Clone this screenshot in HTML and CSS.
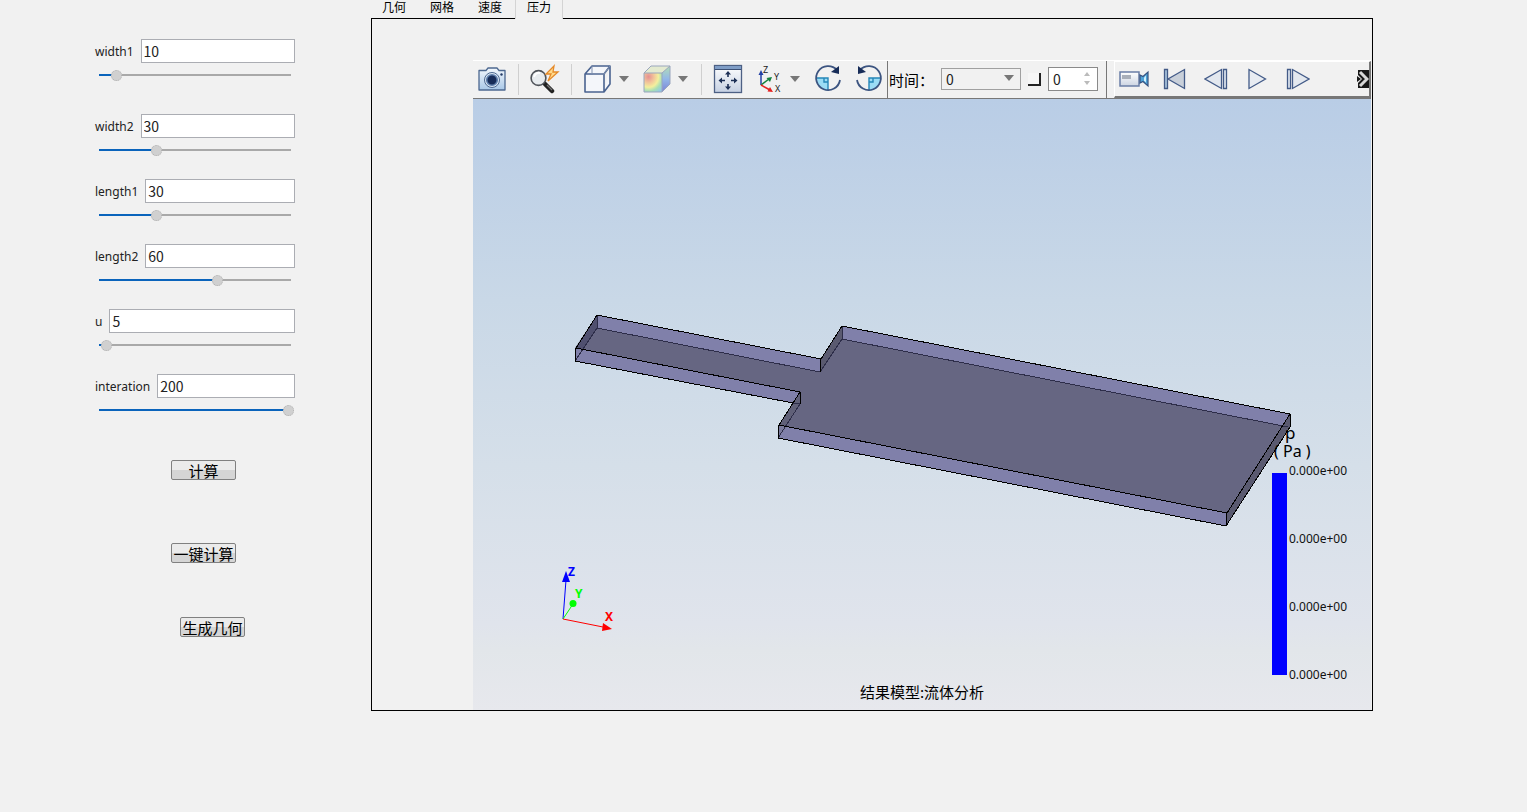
FILE: index.html
```
<!DOCTYPE html>
<html lang="zh-CN">
<head>
<meta charset="utf-8">
<title>流体分析</title>
<link rel="stylesheet" href="styles.css">
</head>
<body>
<div class="app">
  <form class="params">
    <div class="field field-first">
      <div class="field-row"><label for="width1">width1</label><input class="value" id="width1" type="text" value="10"></div>
      <input class="slider" type="range" aria-label="width1" min="2" max="96" value="10" style="--fill:9%">
    </div>
    <div class="field">
      <div class="field-row"><label for="width2">width2</label><input class="value" id="width2" type="text" value="30"></div>
      <input class="slider" type="range" aria-label="width2" min="2" max="96" value="30" style="--fill:30%">
    </div>
    <div class="field">
      <div class="field-row"><label for="length1">length1</label><input class="value" id="length1" type="text" value="30"></div>
      <input class="slider" type="range" aria-label="length1" min="2" max="96" value="30" style="--fill:30%">
    </div>
    <div class="field">
      <div class="field-row"><label for="length2">length2</label><input class="value" id="length2" type="text" value="60"></div>
      <input class="slider" type="range" aria-label="length2" min="2" max="96" value="60" style="--fill:61%">
    </div>
    <div class="field">
      <div class="field-row"><label for="u">u</label><input class="value" id="u" type="text" value="5"></div>
      <input class="slider" type="range" aria-label="u" min="2" max="96" value="5" style="--fill:3%">
    </div>
    <div class="field">
      <div class="field-row"><label for="interation">interation</label><input class="value" id="interation" type="text" value="200"></div>
      <input class="slider" type="range" aria-label="interation" min="2" max="201" value="200" style="--fill:98%">
    </div>
    <div class="actions">
      <button class="action" type="button">计算</button>
      <button class="action action-all" type="button">一键计算</button>
      <button class="action action-geometry" type="button">生成几何</button>
    </div>
  </form>

  <main class="results">
    <nav class="tabs" role="tablist">
      <button class="tab" role="tab">几何</button>
      <button class="tab" role="tab">网格</button>
      <button class="tab" role="tab">速度</button>
      <button class="tab tab-active" role="tab" aria-selected="true">压力</button>
    </nav>
    <section class="panel">
      <div class="toolbar">
        <div class="tools">
          <button class="tool" aria-label="截图">
            <svg width="30" height="30" viewBox="0 0 30 30">
              <defs><linearGradient id="cam" x2="0" y2="1"><stop stop-color="#f2f7fc"/><stop offset="1" stop-color="#a9c8e8"/></linearGradient></defs>
              <path d="M2 6.500H9L11 4H20L22 6.500H28V26H2Z" fill="url(#cam)" stroke="#4d6890" stroke-width="1.300" stroke-linejoin="round"/>
              <circle cx="15" cy="16" r="7.500" fill="#dce8f5" stroke="#4d6890"/>
              <circle cx="15" cy="16" r="5.300" fill="#172c58" stroke="#5f7fac" stroke-width="1.600"/>
              <circle cx="24.500" cy="10.500" r="1.200" fill="#243b66"/>
            </svg>
          </button>
          <span class="divider"></span>
          <button class="tool" aria-label="快速查看">
            <svg width="30" height="30" viewBox="0 0 30 30">
              <path d="M15 20L22 27" stroke="#222" stroke-width="4.500" stroke-linecap="round"/>
              <path d="M17 21L22 26" stroke="#777" stroke-width="1.200"/>
              <circle cx="8.500" cy="14" r="7.400" fill="#e8ecef" stroke="#50545a" stroke-width="1.600"/>
              <path d="M4 13A5 5 0 0 1 10 9" fill="none" stroke="#fff" stroke-width="2"/>
              <path d="M24 2L16 10L21 10L18 17L28 8L23 8Z" fill="#ffd98a" stroke="#e58a2a" stroke-width="1.300"/>
            </svg>
          </button>
          <span class="divider"></span>
          <div class="split">
            <button class="tool" aria-label="显示模式">
              <svg width="30" height="30" viewBox="0 0 30 30">
                <path d="M2 10H21V28H2ZM2 10L9 2H27L21 10M27 2V20L21 28" fill="#f4f6fa" stroke="#4a6390" stroke-width="1.600" stroke-linejoin="round"/>
                <path d="M9 2V10M10 10H21L27 2" fill="none" stroke="#8091b0"/>
              </svg>
            </button>
            <button class="drop" aria-label="显示模式选项"><svg width="12" height="6" viewBox="0 0 12 6"><path d="M1 0H11L6 6Z" fill="#777"/></svg></button>
          </div>
          <div class="split">
            <button class="tool" aria-label="云图">
              <svg width="30" height="30" viewBox="0 0 30 30">
                <defs>
                  <radialGradient id="heat" cx=".25" cy=".2" r="1"><stop stop-color="#e58f92"/><stop offset=".3" stop-color="#f2c49a"/><stop offset=".55" stop-color="#f3ef9d"/><stop offset=".75" stop-color="#a9dfb5"/><stop offset="1" stop-color="#8fc8ea"/></radialGradient>
                  <linearGradient id="heatside" x2="0" y2="1"><stop stop-color="#b2dfb4"/><stop offset=".5" stop-color="#92b7e8"/><stop offset="1" stop-color="#7b83d4"/></linearGradient>
                </defs>
                <path d="M2 9H20V28H2Z" fill="url(#heat)"/>
                <path d="M2 9L9 2H28L20 9Z" fill="#e3ead0"/>
                <path d="M20 9L28 2V20L20 28Z" fill="url(#heatside)"/>
                <path d="M2 9H20V28H2ZM2 9L9 2H28L20 9M28 2V20L20 28" fill="none" stroke="#9aa6bd" stroke-linejoin="round"/>
              </svg>
            </button>
            <button class="drop" aria-label="云图选项"><svg width="12" height="6" viewBox="0 0 12 6"><path d="M1 0H11L6 6Z" fill="#777"/></svg></button>
          </div>
          <span class="divider"></span>
          <button class="tool" aria-label="适应窗口">
            <svg width="30" height="30" viewBox="0 0 30 30">
              <defs><linearGradient id="win" x2="0" y2="1"><stop stop-color="#fff"/><stop offset="1" stop-color="#c5d0e2"/></linearGradient></defs>
              <rect x="1.500" y="1.500" width="27" height="27" fill="url(#win)" stroke="#4d6084" stroke-width="1.300"/>
              <path d="M2 2H28V5H2Z" fill="#7f9dc6"/><path d="M2 5.500H28" stroke="#3c5075"/>
              <path d="M15 13V9M15 20V24M12 16.500H8M18 16.500H22" stroke="#1c2f55" stroke-width="1.600"/>
              <path d="M15 7L18 10.500H12ZM15 26L18 22.500H12ZM5.500 16.500L9 13.500V19.500ZM24.500 16.500L21 13.500V19.500Z" fill="#1c2f55"/>
            </svg>
          </button>
          <div class="split">
            <button class="tool" aria-label="视图方向">
              <svg width="30" height="32" viewBox="0 0 30 32">
                <path d="M7 22V9" stroke="#2340a5" stroke-width="1.500"/><path d="M7 7L9.500 12H4.500Z" fill="#2340a5"/>
                <path d="M7 22L15 16" stroke="#13813d" stroke-width="1.500"/><path d="M18 14L16 19L12.500 15Z" fill="#13813d"/>
                <path d="M7 22L16 27" stroke="#e52222" stroke-width="1.500"/><path d="M19 29L13.500 28.500L16 24Z" fill="#e52222"/>
                <text class="mini" x="9" y="10">Z</text><text class="mini" x="20" y="17">Y</text><text class="mini" x="21" y="29">X</text>
              </svg>
            </button>
            <button class="drop" aria-label="视图方向选项"><svg width="12" height="6" viewBox="0 0 12 6"><path d="M1 0H11L6 6Z" fill="#777"/></svg></button>
          </div>
          <button class="tool" aria-label="顺时针旋转">
            <svg width="30" height="30" viewBox="0 0 30 30">
              <path d="M3 14H15V26.500A12 12 0 0 1 3 14Z" fill="#9bdcf5"/>
              <path d="M3 14H15V26M11 14V18H15" fill="none" stroke="#2586b8" stroke-width="1.400"/>
              <path d="M24 6A12 12 0 1 0 27 16" fill="none" stroke="#3c5480" stroke-width="1.800"/>
              <path d="M26 2V10L18 8Z" fill="#172c58"/>
            </svg>
          </button>
          <button class="tool" aria-label="逆时针旋转">
            <svg width="30" height="30" viewBox="0 0 30 30">
              <path d="M27 14H15V26.500A12 12 0 0 0 27 14Z" fill="#9bdcf5"/>
              <path d="M27 14H15V26M19 14V18H15" fill="none" stroke="#2586b8" stroke-width="1.400"/>
              <path d="M6 6A12 12 0 1 1 3 16" fill="none" stroke="#3c5480" stroke-width="1.800"/>
              <path d="M4 2V10L12 8Z" fill="#172c58"/>
            </svg>
          </button>
        </div>

        <div class="timebar">
          <label class="time-label" for="time">时间：</label>
          <div class="select-wrap">
            <select class="time-select" id="time"><option>0</option></select>
            <svg class="select-arrow" width="10" height="6" viewBox="0 0 10 6"><path d="M0 0H10L5 6Z" fill="#777"/></svg>
          </div>
          <input class="check" type="checkbox" aria-label="启用帧">
          <div class="spin">
            <input class="spin-value" type="text" aria-label="帧" value="0">
            <svg width="6" height="14" viewBox="0 0 6 14"><path d="M0 4H6L3 0ZM0 9H6L3 13Z" fill="#bbb"/></svg>
          </div>
        </div>

        <div class="playback">
          <button class="tool" aria-label="录制">
            <svg width="30" height="20" viewBox="0 0 30 20">
              <defs><linearGradient id="rec" x2="0" y2="1"><stop stop-color="#fff"/><stop offset="1" stop-color="#ccd4e2"/></linearGradient></defs>
              <rect x="1" y="3" width="19" height="14" fill="url(#rec)" stroke="#6a7ea6" stroke-width="1.500"/>
              <rect x="3" y="6" width="9" height="4" fill="#a9afba"/>
              <path d="M21 6L24 7.500L29 3V17L24 12.500L21 14Z" fill="#4fa4d8" stroke="#35517f" stroke-width="1.200"/><path d="M25 8.500L27 6.500V13.500L25 11.500Z" fill="#d0effc"/>
            </svg>
          </button>
          <button class="tool" aria-label="第一帧">
            <svg width="24" height="22" viewBox="0 0 24 22"><path d="M1.500 1.500H4.500V20.500H1.500Z" fill="#a8c4dc" stroke="#435b88" stroke-width="1.300"/><path d="M21.500 1.500V20.500L5 11Z" fill="#c9d0da" stroke="#435b88" stroke-width="1.300"/></svg>
          </button>
          <button class="tool" aria-label="上一帧">
            <svg width="24" height="22" viewBox="0 0 24 22"><path d="M17.500 1.500V20.500L1 11Z" fill="#e3e8ef" stroke="#435b88" stroke-width="1.300"/><path d="M19.500 1.500H22.500V20.500H19.500Z" fill="#dfe7f0" stroke="#435b88" stroke-width="1.300"/></svg>
          </button>
          <button class="tool" aria-label="播放">
            <svg width="20" height="22" viewBox="0 0 20 22"><path d="M2 1.500V20.500L18.500 11Z" fill="#e8ecf2" stroke="#435b88" stroke-width="1.300"/></svg>
          </button>
          <button class="tool" aria-label="下一帧">
            <svg width="24" height="22" viewBox="0 0 24 22"><path d="M1.500 1.500H4.500V20.500H1.500Z" fill="#dfe7f0" stroke="#435b88" stroke-width="1.300"/><path d="M6.500 1.500V20.500L23 11Z" fill="#e3e8ef" stroke="#435b88" stroke-width="1.300"/></svg>
          </button>
          <button class="more" aria-label="更多">
            <svg width="12" height="18" viewBox="0 0 12 18">
              <path d="M1 0H12V18H1V13L5 9L1 5Z" fill="#181818"/>
              <path d="M0 6L4 9L0 12Z" fill="#181818"/>
              <path d="M3 2L10 9L3 16" fill="none" stroke="#d8d8d8" stroke-width="3"/>
            </svg>
          </button>
        </div>
      </div>

      <div class="viewport">
        <svg class="scene" viewBox="473 99 898 611">
          <path d="M597 315L821 359L842 326L1290 414V427L1226 526L778 438V426L793 403L575 361V348Z" fill="#666682"/>
          <path d="M597 315L821 359V372L597 328ZM842 326L1290 414V427L842 339Z" fill="#8080aa"/>
          <path d="M597 315L576 348V361L597 328Z" fill="#50506f"/>
          <path d="M842 326L821 359V372L842 339ZM1290 414L1227 513L1226 526L1290 427Z" fill="#5a5a70"/>
          <path d="M576 348L800 392V404L575 361ZM779 425L1227 513L1226 526L778 438Z" fill="#8080aa"/>
          <path d="M800 392L779 425L778 438L800 404Z" fill="#606078"/>
          <path d="M779 425L787 427L778 438Z" fill="#7a7a9c"/>
          <g fill="none" shape-rendering="crispEdges">
            <path d="M597 315V328L820 372M842 326V339L1288 427M597 328L575 361M820 372L842 339M778 438L800 404L793 403" stroke="#2d2d49"/>
            <path d="M597 315L821 359L842 326L1290 414L1227 513L779 425L800 392L576 348ZM576 348L575 361L793 403M800 392V404M779 425L778 438L1226 526L1227 513M1226 526L1290 427V414M821 359L820 372" stroke="#000"/>
          </g>
          <g class="axes">
            <path d="M563 619L566 580" stroke="#00f"/><path d="M566 571L570 582H562Z" fill="#00f"/>
            <path d="M563 619L573 604" stroke="#0f0"/><circle cx="573" cy="603.500" r="3.500" fill="#0f0"/>
            <path d="M563 619L603 627" stroke="#f00"/><path d="M612 629L602 631L603 623Z" fill="#f00"/>
            <text x="568" y="576" fill="#00f">Z</text>
            <text x="575" y="598" fill="#0f0">Y</text>
            <text x="605" y="621" fill="#f00">X</text>
          </g>
        </svg>
        <div class="legend">
          <div class="legend-title">p</div>
          <div class="legend-unit">( Pa )</div>
          <div class="legend-scale">
            <div class="legend-bar"></div>
            <div class="legend-labels"><span>0.000e+00</span><span>0.000e+00</span><span>0.000e+00</span><span>0.000e+00</span></div>
          </div>
        </div>
        <div class="caption">结果模型:流体分析</div>
      </div>
    </section>
  </main>
</div>
</body>
</html>
```
FILE: styles.css
```
* { box-sizing: border-box; }
body {
  margin: 0;
  background: #f1f1f1;
  color: #000;
  font-family: "Noto Sans", "Noto Sans CJK SC", sans-serif;
  font-size: 12px;
}
button { padding: 0; border: 0; background: none; color: inherit; font: inherit; }
svg { display: block; flex: none; }

.app {
  display: flex;
  min-height: 100vh;
  padding-right: 154px;
  padding-bottom: 101px;
}

/* Parameter form */
.params { flex: none; width: 371px; padding: 39px 76px 0 95px; }
.field { display: flex; flex-direction: column; gap: 4px; margin-bottom: 21px; }
.field-first { margin-bottom: 31px; }
.field-row { display: flex; align-items: center; gap: 7px; height: 24px; color: #222; }
.value {
  flex: 1;
  min-width: 0;
  height: 24px;
  padding: 0 2px;
  border: 1px solid #abadb3;
  background: #fff;
  color: #222;
  font: 14px "Noto Sans CJK SC", sans-serif;
}
.slider {
  appearance: none;
  width: 200px;
  height: 16px;
  margin: 0;
  padding: 0;
  background: linear-gradient(to right, #0a64bc var(--fill), #a9a9a9 var(--fill)) center / 192px 2px no-repeat;
}
.slider::-webkit-slider-thumb {
  appearance: none;
  width: 11px;
  height: 11px;
  border: 1px dotted #b0b0b0;
  border-radius: 50%;
  background: #d0d0d0;
}
.actions { display: flex; flex-direction: column; padding: 21px 0 0 76px; }
.action {
  width: 65px;
  height: 20px;
  border: 1px solid #808080;
  border-radius: 2px;
  background: linear-gradient(#ebebeb 50%, #d5d5d5 50%);
  font: 15px/17px "Noto Sans CJK SC", sans-serif;
  white-space: nowrap;
}
.action-all { margin-top: 63px; }
.action-geometry { margin-top: 54px; margin-left: 9px; }

/* Result panel */
.results { flex: 1; min-width: 0; display: flex; flex-direction: column; }
.tabs { display: flex; height: 18px; }
.tab { width: 48px; height: 18px; padding: 0 2px 4px 0; font: 12px/14px "Noto Sans CJK SC", sans-serif; }
.tab-active {
  position: relative;
  height: 19px;
  padding: 0 0 5px;
  border: solid #d4d4d4;
  border-width: 0 1px;
  background: #f1f1f1;
}
.panel {
  flex: 1;
  display: flex;
  flex-direction: column;
  padding: 41px 1px 0 101px;
  border: 1px solid #000;
}
.toolbar {
  display: flex;
  height: 39px;
  border-top: 1px solid #fff;
  border-bottom: 1px solid #777;
}
.tools { display: flex; align-items: center; gap: 3px; width: 414px; }
.tool { display: flex; flex: none; align-items: center; justify-content: center; width: 38px; height: 36px; }
.tools, .timebar { padding-bottom: 1px; }
.split { display: flex; }
.drop { display: flex; align-items: center; width: 18px; padding-left: 1px; }
.divider { flex: none; width: 1px; height: 31px; margin: 0 4px; background: #cfcfcf; }
.mini { fill: #222; font: 9px "Noto Sans", sans-serif; }
.timebar {
  display: flex;
  align-items: center;
  gap: 7px;
  padding-left: 1px;
  padding-right: 8px;
  border: solid #777;
  border-width: 0 1px;
}
.time-label { width: 45px; font: 15px "Noto Sans CJK SC", sans-serif; white-space: nowrap; }
.select-wrap { position: relative; }
.time-select {
  display: block;
  appearance: none;
  width: 80px;
  height: 22px;
  padding: 0 4px;
  border: 1px solid #a0a0a0;
  border-radius: 0;
  background: #f1f1f1;
  color: #222;
  font: 14px "Noto Sans CJK SC", sans-serif;
}
.select-arrow { position: absolute; right: 7px; top: 7px; pointer-events: none; }
.check {
  appearance: none;
  width: 13px;
  height: 13px;
  margin: 0;
  border: solid #222;
  border-width: 0 2px 2px 0;
  background: #f6f6f6;
}
.spin {
  display: flex;
  align-items: center;
  width: 50px;
  height: 24px;
  padding: 0 7px 0 4px;
  border: 1px solid #8a8a8a;
  background: #fff;
}
.spin-value {
  flex: 1;
  min-width: 0;
  padding: 0;
  border: 0;
  background: none;
  color: #222;
  font: 14px/20px "Noto Sans CJK SC", sans-serif;
}
.playback {
  flex: 1;
  display: flex;
  align-items: center;
  gap: 3px;
  margin-left: 7px;
  border: solid #fff;
  border-width: 1px 2px 2px 1px;
  border-right-color: #777;
  border-bottom-color: #777;
}
.more { margin-left: auto; }

/* 3D view */
.viewport {
  position: relative;
  flex: 1;
  min-height: 400px;
  background: linear-gradient(#b9cde6, #c9d8e7 33%, #d5dfe9 60%, #e0e4ec 86%, #e2e6ea 90%, #e7e8ed);
}
.scene { position: absolute; inset: 0; width: 100%; height: 100%; }
.axes text { font: bold 12px "Noto Sans", sans-serif; }
.legend { position: absolute; right: 21px; bottom: 27px; width: 78px; color: #111; }
.legend-title { padding-left: 13px; font-size: 17px; line-height: 18px; color: #000; }
.legend-unit { padding: 0 0 3px 2px; font-size: 16px; line-height: 18px; color: #000; }
.legend-scale { display: flex; gap: 2px; }
.legend-bar { width: 15px; height: 202px; margin-top: 10px; background: #00f; }
.legend-labels {
  display: flex;
  flex-direction: column;
  justify-content: space-between;
  height: 220px;
  line-height: 16px;
}
.caption {
  position: absolute;
  inset: auto 0 7px;
  font: 15px/22px "Noto Sans CJK SC", sans-serif;
  text-align: center;
}
```
